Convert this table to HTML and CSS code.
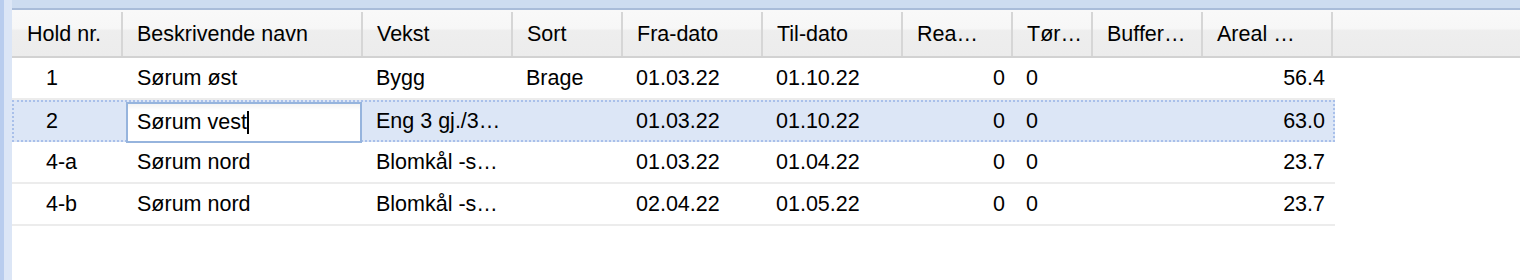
FILE: index.html
```html
<!DOCTYPE html>
<html>
<head>
<meta charset="utf-8">
<link rel="stylesheet" href="styles.css">
</head>
<body>
<div class="frame">
  <div class="side"></div>
  <div class="content">
    <div class="topband"></div>
    <div class="grid-header">
      <div class="hcell">Hold nr.</div>
      <div class="hcell">Beskrivende navn</div>
      <div class="hcell">Vekst</div>
      <div class="hcell">Sort</div>
      <div class="hcell">Fra-dato</div>
      <div class="hcell">Til-dato</div>
      <div class="hcell">Rea…</div>
      <div class="hcell">Tør…</div>
      <div class="hcell">Buffer…</div>
      <div class="hcell">Areal …</div>
      <div class="hcell filler"></div>
    </div>
    <div class="rows">
      <div class="row">
        <div class="cell id">1</div>
        <div class="cell">Sørum øst</div>
        <div class="cell">Bygg</div>
        <div class="cell">Brage</div>
        <div class="cell">01.03.22</div>
        <div class="cell">01.10.22</div>
        <div class="cell num">0</div>
        <div class="cell">0</div>
        <div class="cell"></div>
        <div class="cell num">56.4</div>
      </div>
      <div class="row selected">
        <div class="cell id">2</div>
        <div class="cell editing">
          <div class="editor">Sørum vest<span class="caret"></span></div>
        </div>
        <div class="cell">Eng 3 gj./3…</div>
        <div class="cell"></div>
        <div class="cell">01.03.22</div>
        <div class="cell">01.10.22</div>
        <div class="cell num">0</div>
        <div class="cell">0</div>
        <div class="cell"></div>
        <div class="cell num">63.0</div>
      </div>
      <div class="row">
        <div class="cell id">4-a</div>
        <div class="cell">Sørum nord</div>
        <div class="cell">Blomkål -s…</div>
        <div class="cell"></div>
        <div class="cell">01.03.22</div>
        <div class="cell">01.04.22</div>
        <div class="cell num">0</div>
        <div class="cell">0</div>
        <div class="cell"></div>
        <div class="cell num">23.7</div>
      </div>
      <div class="row">
        <div class="cell id">4-b</div>
        <div class="cell">Sørum nord</div>
        <div class="cell">Blomkål -s…</div>
        <div class="cell"></div>
        <div class="cell">02.04.22</div>
        <div class="cell">01.05.22</div>
        <div class="cell num">0</div>
        <div class="cell">0</div>
        <div class="cell"></div>
        <div class="cell num">23.7</div>
      </div>
    </div>
  </div>
</div>
</body>
</html>
```

FILE: styles.css
```css
html, body {
  margin: 0;
  padding: 0;
  background: #ffffff;
}

body {
  font-family: "Liberation Sans", Arial, sans-serif;
  font-size: 21.5px;
  color: #000;
  width: 1520px;
  height: 280px;
  overflow: hidden;
}

.frame {
  display: flex;
  height: 280px;
}

.side {
  width: 8px;
  flex: none;
  background: #dce6f6;
  border-left: 4px solid #b9cdee;
}

.content {
  flex: 1;
  display: flex;
  flex-direction: column;
  min-width: 0;
}

.topband {
  height: 8px;
  background: #cddcf0;
  border-bottom: 2px solid #a9bcd9;
  flex: none;
}

.grid-header {
  display: grid;
  grid-template-columns: 111px 240px 150px 110px 140px 140px 110px 80px 110px 130px 1fr;
  padding-top: 2px;
  background: linear-gradient(#f9f9f9 0%, #f7f7f7 40%, #eeeeee 45%, #ececec 100%);
  border-bottom: 2px solid #d2d2d2;
  flex: none;
}

.hcell {
  height: 44px;
  display: flex;
  align-items: center;
  padding-left: 14px;
  border-right: 2px solid #d6d6d6;
  box-sizing: border-box;
  white-space: nowrap;
  overflow: hidden;
}

.hcell:first-child {
  padding-left: 15px;
}

.hcell.filler {
  border-right: none;
}

.rows {
  width: 1323px;
  display: flex;
  flex-direction: column;
}

.row {
  display: grid;
  grid-template-columns: 111px 240px 150px 110px 140px 140px 110px 80px 110px 130px;
  height: 42px;
  box-sizing: border-box;
  border-bottom: 2px solid #ececec;
}

.row.selected {
  background: #dce6f6;
  border-bottom: none;
  outline: 2px dotted #a9c0ea;
  outline-offset: -2px;
}

.cell {
  display: flex;
  align-items: center;
  padding-left: 13px;
  padding-right: 8px;
  white-space: nowrap;
  overflow: hidden;
  box-sizing: border-box;
}

.row .cell:nth-child(2) {
  padding-left: 14px;
}

.cell.id {
  padding-left: 34px;
}

.cell.num {
  justify-content: flex-end;
}

.cell.editing {
  position: relative;
  overflow: visible;
}

.editor {
  position: absolute;
  left: 3px;
  top: 2px;
  width: 236px;
  height: 41px;
  box-sizing: border-box;
  border: 2px solid #96b4dd;
  background: linear-gradient(#f3f3f3 0px, #ffffff 6px, #ffffff 100%);
  padding-left: 9px;
  display: flex;
  align-items: center;
  white-space: nowrap;
  z-index: 2;
}

.caret {
  display: inline-block;
  width: 0;
  height: 23px;
  border-left: 2px solid #000;
}
```
